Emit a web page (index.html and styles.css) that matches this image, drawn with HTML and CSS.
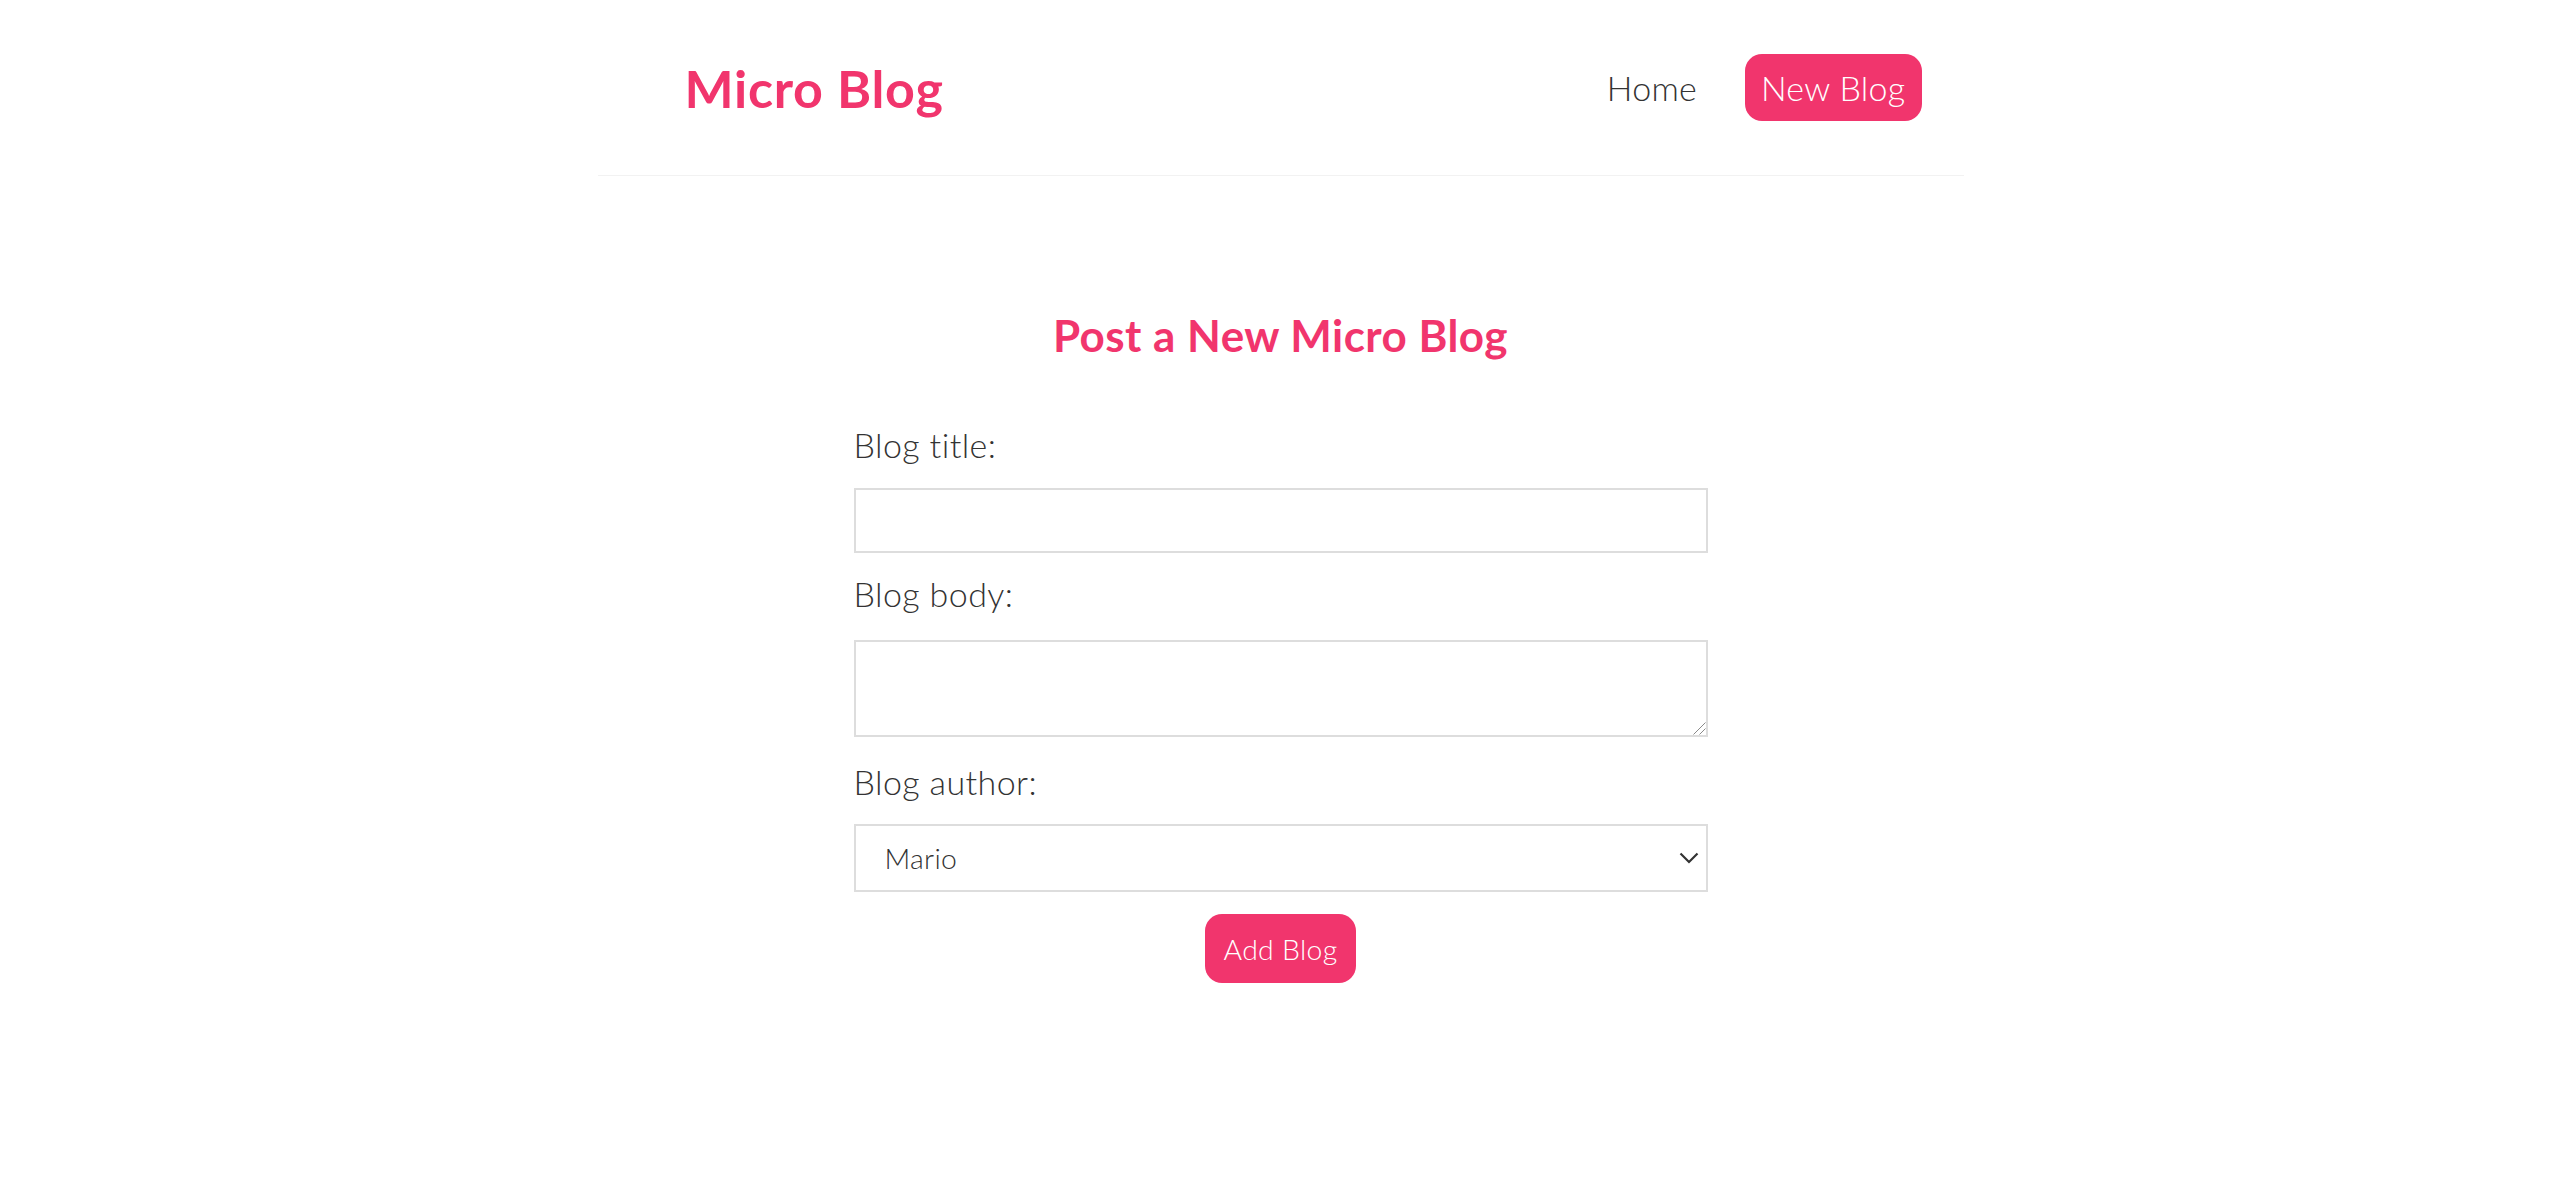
FILE: index.html
```html
<!DOCTYPE html>
<html lang="en">
<head>
<meta charset="utf-8">
<title>Micro Blog</title>
<link rel="stylesheet" href="styles.css">
</head>
<body>
<div class="app">
  <nav class="navbar">
    <h1 class="brand">Micro Blog</h1>
    <div class="links">
      <a href="#" class="link">Home</a>
      <a href="#" class="link link-cta">New Blog</a>
    </div>
  </nav>
  <main class="content">
    <div class="create">
      <h2 class="create-title">Post a New Micro Blog</h2>
      <form class="create-form">
        <label class="field-label">Blog title:</label>
        <input type="text" class="field field-input">
        <label class="field-label">Blog body:</label>
        <div class="textarea-wrap">
          <textarea class="field field-textarea"></textarea>
          <svg class="grip" viewBox="0 0 13 13" aria-hidden="true">
            <line x1="0.5" y1="12.5" x2="12.5" y2="0.5"></line>
            <line x1="6.5" y1="12.5" x2="12.5" y2="6.5"></line>
          </svg>
        </div>
        <label class="field-label">Blog author:</label>
        <div class="select-wrap">
          <select class="field field-select">
            <option>Mario</option>
            <option>Yoshi</option>
          </select>
          <svg class="chevron" viewBox="0 0 20 12" aria-hidden="true">
            <polyline points="1.5,1.5 10,10 18.5,1.5"></polyline>
          </svg>
        </div>
        <button type="button" class="submit">Add Blog</button>
      </form>
    </div>
  </main>
</div>
</body>
</html>
```
FILE: styles.css
```css
* {
  margin: 0;
  padding: 0;
  box-sizing: border-box;
}

html,
body {
  background: #fff;
}

body {
  font-family: "Lato", "Open Sans", "Liberation Sans", sans-serif;
  font-weight: 300;
  color: #333;
}

.navbar {
  width: 1366px;
  height: 176px;
  margin: 0 auto;
  padding: 0 42px 0 43px;
  display: flex;
  align-items: center;
  border-bottom: 1px solid #f2f2f2;
}

.brand {
  margin-left: 44px;
  font-size: 52px;
  line-height: 62px;
  font-weight: 700;
  letter-spacing: 0.7px;
  color: #f1356d;
}

.links {
  margin-left: auto;
  display: flex;
  align-items: center;
  gap: 35px;
}

.link {
  display: block;
  padding: 12.8px;
  font-size: 34px;
  line-height: 42px;
  letter-spacing: 0.3px;
  color: #333;
  text-decoration: none;
}

.link-cta {
  color: #fff;
  background: #f1356d;
  border-radius: 17px;
  padding: 12.8px 16px;
}

.content {
  width: 1366px;
  margin: 0 auto;
  padding: 131.4px 43px 43px;
}

.create {
  width: 854px;
  margin: 0 auto;
  text-align: center;
}

.create-title {
  font-size: 44px;
  line-height: 56px;
  font-weight: 700;
  letter-spacing: 0.45px;
  color: #f1356d;
  margin-bottom: 60.7px;
}

.field-label {
  display: block;
  text-align: left;
  font-size: 34px;
  line-height: 42px;
  letter-spacing: 0.4px;
  color: #333;
}

.field {
  display: block;
  width: 100%;
  border: 2px solid #ddd;
  border-radius: 0;
  background: #fff;
  font-family: inherit;
  font-weight: 300;
  color: #333;
  outline: none;
}

.field-input {
  height: 64.4px;
  margin: 22.2px 0 20.8px;
  padding: 0 21px;
  font-size: 28.4px;
}

.textarea-wrap {
  position: relative;
  margin: 24.5px 0 23.8px;
}

.field-textarea {
  height: 97px;
  resize: none;
  padding: 13px 21px;
  font-size: 28.4px;
}

.grip {
  position: absolute;
  right: 2px;
  bottom: 2px;
  width: 13px;
  height: 13px;
  stroke: #8a8a8a;
  stroke-width: 1;
  fill: none;
}

.select-wrap {
  position: relative;
  margin: 21.5px 0 22px;
}

.field-select {
  height: 68px;
  -webkit-appearance: none;
  appearance: none;
  padding: 0 40px 0 29px;
  font-size: 28.4px;
  letter-spacing: 0.3px;
}

.chevron {
  position: absolute;
  right: 9px;
  top: 28px;
  width: 20px;
  height: 12px;
  fill: none;
  stroke: #333;
  stroke-width: 2.2;
  pointer-events: none;
}

.submit {
  display: block;
  margin: 0 auto;
  height: 69px;
  padding: 0 19px;
  border: 0;
  border-radius: 17px;
  background: #f1356d;
  color: #fff;
  font-family: inherit;
  font-weight: 300;
  font-size: 28.4px;
  letter-spacing: 0.3px;
  cursor: pointer;
}
```
